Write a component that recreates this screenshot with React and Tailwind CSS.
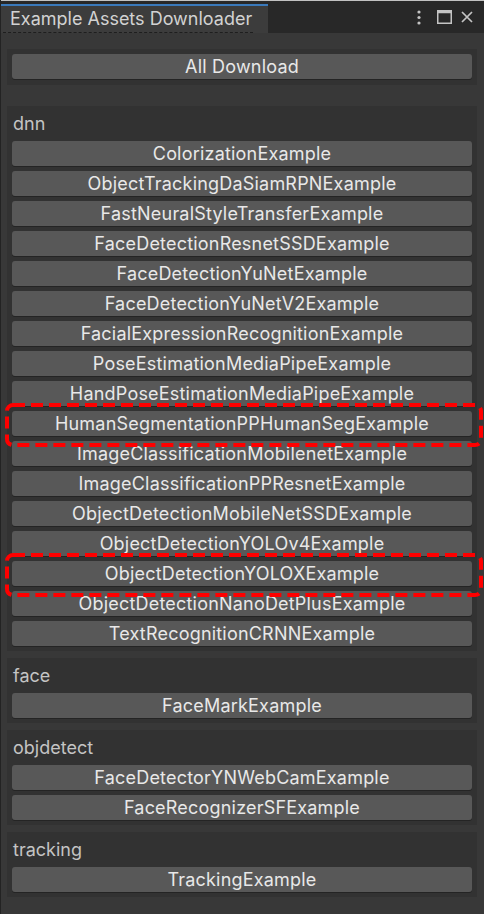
const sections = [
  {
    name: "dnn",
    items: [
      "ColorizationExample",
      "ObjectTrackingDaSiamRPNExample",
      "FastNeuralStyleTransferExample",
      "FaceDetectionResnetSSDExample",
      "FaceDetectionYuNetExample",
      "FaceDetectionYuNetV2Example",
      "FacialExpressionRecognitionExample",
      "PoseEstimationMediaPipeExample",
      "HandPoseEstimationMediaPipeExample",
      "HumanSegmentationPPHumanSegExample",
      "ImageClassificationMobilenetExample",
      "ImageClassificationPPResnetExample",
      "ObjectDetectionMobileNetSSDExample",
      "ObjectDetectionYOLOv4Example",
      "ObjectDetectionYOLOXExample",
      "ObjectDetectionNanoDetPlusExample",
      "TextRecognitionCRNNExample",
    ],
  },
  { name: "face", items: ["FaceMarkExample"] },
  { name: "objdetect", items: ["FaceDetectorYNWebCamExample", "FaceRecognizerSFExample"] },
  { name: "tracking", items: ["TrackingExample"] },
];

// highlighted in the screenshot with a red dashed frame
const marked = ["HumanSegmentationPPHumanSegExample", "ObjectDetectionYOLOXExample"];

const DashedFrame = () => (
  <div className="absolute -left-[7px] -right-[11px] -top-[8px] -bottom-[11px] z-10 pointer-events-none">
    <svg className="w-full h-full" preserveAspectRatio="none">
      <rect
        x="2"
        y="2"
        width="calc(100% - 4px)"
        height="calc(100% - 4px)"
        rx="6"
        fill="none"
        stroke="#ff0000"
        strokeWidth="4"
        strokeDasharray="12 6"
      />
    </svg>
  </div>
);

const UnityButton = ({ label }) => (
  <div className="relative">
    <button className="w-full h-[25px] rounded-[3px] bg-[#585858] shadow-[0_1px_0_#242424] text-[#e8e8e8] text-[18px] tracking-[0.2px] leading-[25px] text-center whitespace-nowrap">
      {label}
    </button>
    {marked.includes(label) && <DashedFrame />}
  </div>
);

export default function App() {
  return (
    <div
      className="w-[484px] h-[914px] bg-[#383838] overflow-hidden flex flex-col border-l border-[#232323]"
      style={{ fontFamily: "Inter, 'Noto Sans', sans-serif" }}
    >
      {/* ── Window header ── */}
      <div className="h-[1px] bg-[#c2c2c2]" />
      <div className="h-[32px] bg-[#282828] flex items-end shrink-0">
        <div className="w-[267px] h-[29px] bg-[#3c3c3c] border-t-2 border-[#3a79bb] flex items-end px-[2px]">
          <div className="w-[250px] h-[27px] border-b border-dashed border-[#1e1e1e] pl-[7px] text-[18px] leading-[26px] text-[#d2d2d2] whitespace-nowrap">
            Example Assets Downloader
          </div>
        </div>
        <div className="flex-1 h-full flex items-center justify-end pr-[11px]">
          <svg width="4" height="15" viewBox="0 0 4 15" className="mr-[16px]">
            <circle cx="2" cy="2" r="1.6" fill="#c4c4c4" />
            <circle cx="2" cy="7.5" r="1.6" fill="#c4c4c4" />
            <circle cx="2" cy="13" r="1.6" fill="#c4c4c4" />
          </svg>
          <svg width="15" height="14" viewBox="0 0 15 14" className="mr-[9px]">
            <rect x="0.75" y="0.75" width="13.5" height="12.5" fill="none" stroke="#c4c4c4" strokeWidth="1.5" />
            <rect x="0.75" y="0.75" width="13.5" height="2.5" fill="#c4c4c4" />
          </svg>
          <svg width="12" height="12" viewBox="0 0 12 12">
            <path d="M1 1 L11 11 M11 1 L1 11" stroke="#c4c4c4" strokeWidth="1.7" />
          </svg>
        </div>
      </div>

      {/* ── Content ── */}
      <div className="flex flex-col pl-[6px] pt-[16px] pr-[7px]">
        <div className="bg-[#323232] px-[5px] pt-[5px] pb-[6px]">
          <UnityButton label="All Download" />
        </div>

        <div className="flex flex-col gap-[7px] mt-[21px]">
          {sections.map((section) => (
            <div key={section.name} className="bg-[#323232] px-[5px] pb-[5px]">
              <div className="h-[35px] flex items-center pl-[1px] text-[18px] text-[#c4c4c4]">
                {section.name}
              </div>
              <div className="flex flex-col gap-[5px]">
                {section.items.map((item) => (
                  <UnityButton key={item} label={item} />
                ))}
              </div>
            </div>
          ))}
        </div>
      </div>
    </div>
  );
}
